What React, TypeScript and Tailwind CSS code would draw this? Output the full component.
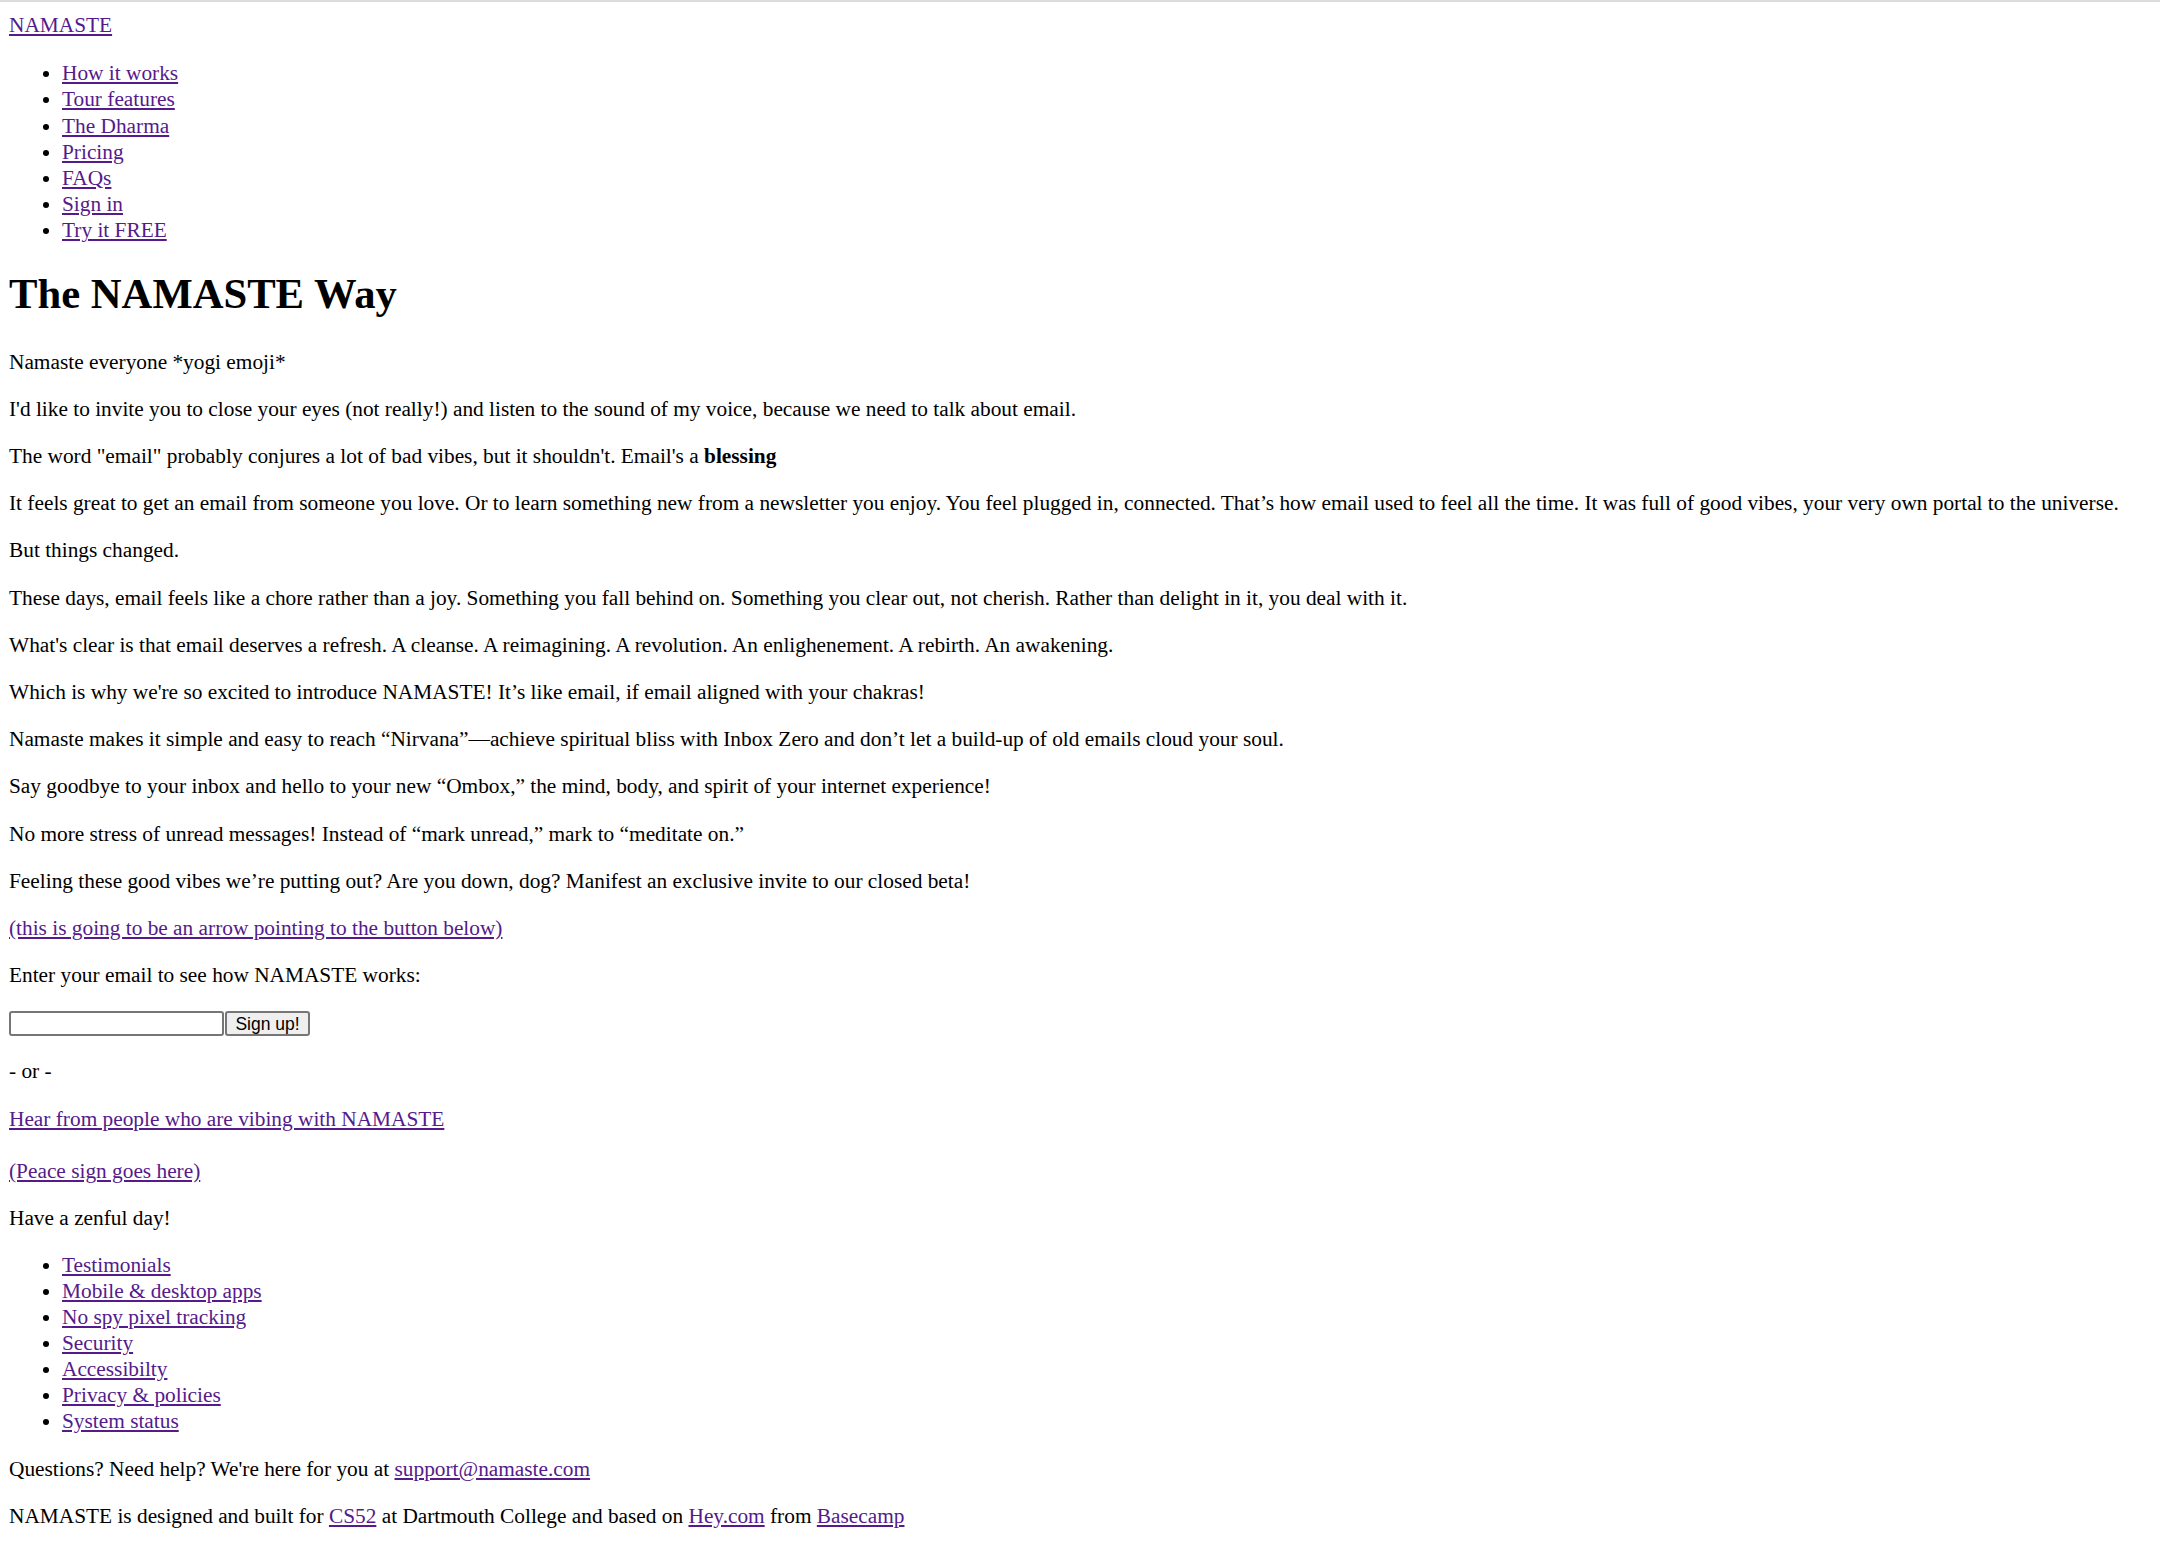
import React from "react";

const link = "text-[#551a8b] underline";

export default function App() {
  const p = "my-[21px]";
  return (
    <div className="bg-white min-h-screen text-black">
      <div className="h-[2px] bg-[#dcdce0]" />
      <div className="px-[9px] pt-[10px] font-['Liberation_Serif','Times_New_Roman',serif] text-[21.33px] leading-[26.2px]">
        <div>
          <a href="#" className={link}>NAMASTE</a>
        </div>
        <ul className="mt-[22px] mb-[21px] pl-[53px] list-disc">
          {["How it works", "Tour features", "The Dharma", "Pricing", "FAQs", "Sign in", "Try it FREE"].map((t) => (
            <li key={t}>
              <a href="#" className={link}>{t}</a>
            </li>
          ))}
        </ul>
        <h1 className="text-[42.67px] leading-[50px] font-bold mt-[25px] mb-[30px]">The NAMASTE Way</h1>
        <p className={p}>Namaste everyone *yogi emoji*</p>
        <p className={p}>I'd like to invite you to close your eyes (not really!) and listen to the sound of my voice, because we need to talk about email.</p>
        <p className={p}>The word "email" probably conjures a lot of bad vibes, but it shouldn't. Email's a <b>blessing</b></p>
        <p className={p}>It feels great to get an email from someone you love. Or to learn something new from a newsletter you enjoy. You feel plugged in, connected. That’s how email used to feel all the time. It was full of good vibes, your very own portal to the universe.</p>
        <p className={p}>But things changed.</p>
        <p className={p}>These days, email feels like a chore rather than a joy. Something you fall behind on. Something you clear out, not cherish. Rather than delight in it, you deal with it.</p>
        <p className={p}>What's clear is that email deserves a refresh. A cleanse. A reimagining. A revolution. An enlighenement. A rebirth. An awakening.</p>
        <p className={p}>Which is why we're so excited to introduce NAMASTE! It’s like email, if email aligned with your chakras!</p>
        <p className={p}>Namaste makes it simple and easy to reach “Nirvana”—achieve spiritual bliss with Inbox Zero and don’t let a build-up of old emails cloud your soul.</p>
        <p className={p}>Say goodbye to your inbox and hello to your new “Ombox,” the mind, body, and spirit of your internet experience!</p>
        <p className={p}>No more stress of unread messages! Instead of “mark unread,” mark to “meditate on.”</p>
        <p className={p}>Feeling these good vibes we’re putting out? Are you down, dog? Manifest an exclusive invite to our closed beta!</p>
        <p className={p}><a href="#" className={link}>(this is going to be an arrow pointing to the button below)</a></p>
        <p className={p}>Enter your email to see how NAMASTE works:</p>
        <div className="mt-[22.5px] mb-[21.5px] flex items-center h-[26px]">
          <input className="w-[215px] h-[25px] border-2 border-[#767676] rounded-[3px] bg-white" />
          <button className="h-[25px] w-[85px] border-2 border-[#767676] rounded-[3px] bg-[#efefef] font-['Liberation_Sans',Arial,sans-serif] text-[17.5px] leading-[20px] ml-[1px]">Sign up!</button>
        </div>
        <p className={p}>- or -</p>
        <p className={p}><a href="#" className={link}>Hear from people who are vibing with NAMASTE</a></p>
        <p className="mt-[26px] mb-[21px]"><a href="#" className={link}>(Peace sign goes here)</a></p>
        <p className={p}>Have a zenful day!</p>
        <ul className="mt-[22px] mb-[21px] pl-[53px] list-disc leading-[25.9px]">
          {["Testimonials", "Mobile & desktop apps", "No spy pixel tracking", "Security", "Accessibilty", "Privacy & policies", "System status"].map((t) => (
            <li key={t}>
              <a href="#" className={link}>{t}</a>
            </li>
          ))}
        </ul>
        <p className={p}>Questions? Need help? We're here for you at <a href="#" className={link}>support@namaste.com</a></p>
        <p className={p}>NAMASTE is designed and built for <a href="#" className={link}>CS52</a> at Dartmouth College and based on <a href="#" className={link}>Hey.com</a> from <a href="#" className={link}>Basecamp</a></p>
      </div>
    </div>
  );
}
